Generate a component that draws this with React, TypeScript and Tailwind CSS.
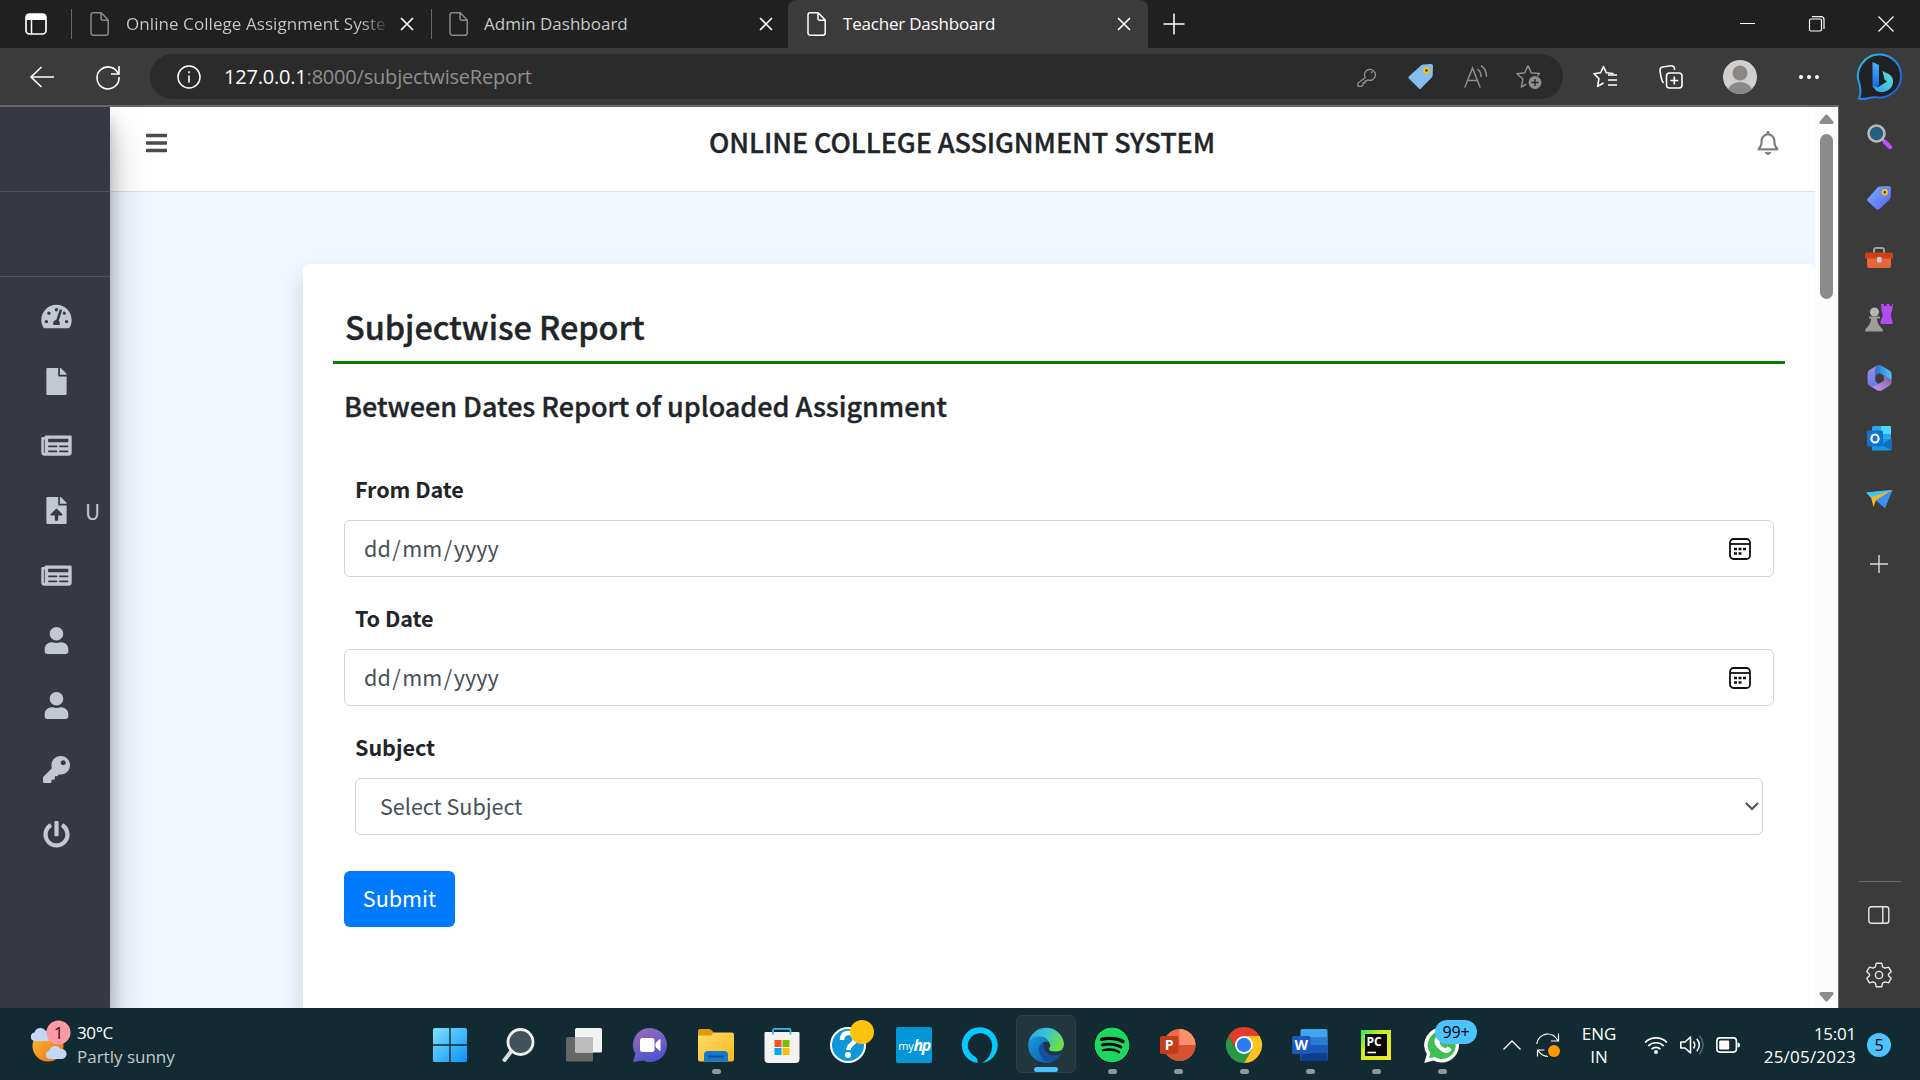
import type { ReactNode } from "react";
import {
  FaBars,
  FaFile,
  FaFileUpload,
  FaKey,
  FaNewspaper,
  FaPowerOff,
  FaRegBell,
  FaSpotify,
  FaTachometerAlt,
  FaUser,
} from "react-icons/fa";

const pageFont = "font-['Noto_Sans_CJK_SC',sans-serif]";
const uiFont = "font-['Open_Sans',sans-serif]";

function Svg({ box, className, children }: { box: string; className: string; children: ReactNode }) {
  return (
    <svg viewBox={box} className={"shrink-0 overflow-visible " + className} fill="none" stroke="none">
      {children}
    </svg>
  );
}

/* ---------- Tab strip ---------- */

function PageGlyph({ className }: { className: string }) {
  return (
    <Svg box="0 0 19 24" className={"h-6 w-[19px] " + className}>
      <path d="M3.2.8h8L18.2 8v13a2.2 2.2 0 0 1-2.2 2.2H3.2A2.2 2.2 0 0 1 1 21V3A2.2 2.2 0 0 1 3.2.8ZM11 1v5.5A1.8 1.8 0 0 0 12.800 8.300H18" stroke="currentColor" strokeWidth="1.5" strokeLinejoin="round" />
    </Svg>
  );
}

function CloseGlyph() {
  return (
    <Svg box="0 0 14 14" className="size-[14px] text-white">
      <path d="M1 1l12 12M13 1L1 13" stroke="currentColor" strokeWidth="1.6" />
    </Svg>
  );
}

function Divider() {
  return <div className="h-[30px] w-px shrink-0 bg-[#666]" />;
}

function TabStrip() {
  return (
    <div className="flex h-12 shrink-0 items-center bg-[#202020] text-[17px] text-[#c9c9c9]">
      <Svg box="0 0 22 22" className="ml-[25px] size-[22px]">
        <rect x="1" y="1" width="20" height="20" rx="3.5" stroke="#fff" strokeWidth="1.7" />
        <path d="M1 3.500A2.500 2.500 0 0 1 3.500 1h15A2.500 2.500 0 0 1 21 3.500V7H1Z" fill="#fff" />
        <path d="M6.500 7v14" stroke="#fff" strokeWidth="1.5" />
      </Svg>
      <div className="ml-6 flex h-full w-[360px] items-center">
        <Divider />
        <PageGlyph className="ml-[18px] text-[#8a8a8a]" />
        <div className="ml-[17px] w-[262px] overflow-hidden whitespace-nowrap bg-gradient-to-r from-[#c9c9c9] from-90% to-[#303030] bg-clip-text tracking-[0.07px] text-transparent">
          Online College Assignment Syste
        </div>
        <div className="ml-[12px]">
          <CloseGlyph />
        </div>
      </div>
      <div className="flex h-full w-[357px] items-center">
        <Divider />
        <PageGlyph className="ml-[17px] text-[#8a8a8a]" />
        <div className="ml-[16px] w-[262px] whitespace-nowrap">Admin Dashboard</div>
        <div className="ml-[13px]">
          <CloseGlyph />
        </div>
      </div>
      <div className="flex h-full w-[360px] items-center rounded-t-lg bg-[#3b3b3b] text-white">
        <PageGlyph className="ml-[19px] text-white" />
        <div className="ml-[17px] w-[262px] whitespace-nowrap tracking-[-0.2px]">Teacher Dashboard</div>
        <div className="ml-[12px]">
          <CloseGlyph />
        </div>
      </div>
      <Svg box="0 0 22 22" className="ml-[15px] size-[22px]">
        <path d="M11 .5v21M.5 11h21" stroke="#fff" strokeWidth="1.500" />
      </Svg>
      <Svg box="0 0 16 16" className="ml-auto size-4">
        <path d="M0 7.500h15" stroke="#fff" />
      </Svg>
      <Svg box="0 0 16 16" className="ml-[53px] size-4">
        <rect x=".5" y="3" width="12" height="12" rx="1.500" stroke="#fff" strokeWidth="1.200" />
        <path d="M3 .7h9a3 3 0 0 1 3 3V13" stroke="#fff" strokeWidth="1.200" />
      </Svg>
      <Svg box="0 0 16 16" className="ml-[53px] mr-[26px] size-4">
        <path d="M.5.5l15 15M15.500.5l-15 15" stroke="#fff" strokeWidth="1.200" />
      </Svg>
    </div>
  );
}

/* ---------- Address bar ---------- */

function BingLogo() {
  return (
    <Svg box="0 0 46 48" className="-mt-px ml-px h-12 w-[46px]">
      <defs>
        <linearGradient id="bingRing" x1="0" y1="0" x2="1" y2="1">
          <stop offset="0" stopColor="#22c8f0" />
          <stop offset="1" stopColor="#1f4fe0" />
        </linearGradient>
        <linearGradient id="bingStem" x1="0" y1="0" x2="0" y2="1">
          <stop offset="0" stopColor="#46b8f8" />
          <stop offset="1" stopColor="#1560e8" />
        </linearGradient>
        <linearGradient id="bingBowl" x1="0" y1="1" x2="1" y2="0">
          <stop offset="0" stopColor="#2aa4f4" />
          <stop offset="1" stopColor="#5ee6d0" />
        </linearGradient>
      </defs>
      <path d="M23 1.500a21.500 21.500 0 1 1-4 42.700C12 43.500 8 47.500 2 45.500 4.500 41 3.500 36 2.500 31A21.500 21.500 0 0 1 23 1.500Z" fill="#1f2124" stroke="url(#bingRing)" strokeWidth="2" />
      <path d="M15.500 9l6.500 3v20l-3 4-3.500-2.500Z" fill="url(#bingStem)" />
      <path d="M25.500 18l7 3.500q4 3 3.500 8-1 7-8 9-5 1.500-9-1l-3.500-4.500 5 1.500 9.500-6-2.500-2Z" fill="url(#bingBowl)" />
    </Svg>
  );
}

function StarPath() {
  return <path d="M10.500 1.500l2.800 6.300 6.700.7M10.500 1.500L7.700 7.800l-6.700.9 4.900 4.900-1.200 7.800 5.300-3.200" stroke="currentColor" strokeWidth="1.600" strokeLinejoin="round" strokeLinecap="round" />;
}

function Toolbar() {
  return (
    <div className="flex h-[57px] shrink-0 items-start bg-[#3b3b3b] pt-1.5">
      <div className="flex h-[45px] flex-1 items-center text-white">
        <Svg box="0 0 24 22" className="ml-[30px] h-[22px] w-6">
          <path d="M11.500 1L1 11l10.500 10M1 11h23" stroke="currentColor" strokeWidth="1.600" />
        </Svg>
        <Svg box="0 0 24 24" className="ml-[42px] size-6">
          <path d="M22.500 9.500A11 11 0 1 0 23 12M23 1v8h-8" stroke="currentColor" strokeWidth="1.600" />
        </Svg>
        <div className="ml-[30px] flex h-[45px] w-[1413px] items-center rounded-full bg-[#2b2b2b] text-[#8f8f8f]">
          <Svg box="0 0 24 24" className="ml-[27px] size-6 text-white">
            <circle cx="12" cy="12" r="11" stroke="currentColor" strokeWidth="1.500" />
            <path d="M12 10.500v7M12 6.200v2" stroke="currentColor" strokeWidth="1.600" />
          </Svg>
          <div className="ml-[23px] whitespace-nowrap pt-px text-[20px] tracking-[-0.2px]">
            <span className="text-white">127.0.0.1</span>:8000/subjectwiseReport
          </div>
          <Svg box="0 0 20 20" className="ml-auto size-5">
            <path d="M8.200 10.700a5.500 5.500 0 1 1 2.500 2.200L9.500 14H8v2H6v2l-1.300 1.300H1v-3.300Z" stroke="currentColor" strokeWidth="1.300" strokeLinejoin="round" />
            <circle cx="14.700" cy="5.200" r="1" fill="currentColor" />
          </Svg>
          <Svg box="0 0 25 25" className="ml-[31px] size-[25px]">
            <path d="M13 1.500Q14 .5 15.500.4L23 0q2 0 2 2l-.3 9q0 1.500-1 2.500L13 24.500q-1 1-2 0L.8 14.500q-1-1 0-2Z" fill="#83beec" />
            <circle cx="18.500" cy="6.500" r="2.300" stroke="#fdc400" strokeWidth="2" fill="#2b2b2b" />
          </Svg>
          <Svg box="0 0 24 24" className="ml-[31px] size-6">
            <path d="M1 22L8.500 3 16 22M3.500 15.500h10M14 4.500q3 2.500 3 7M17.500.8q5 4 5 10.500" stroke="currentColor" strokeWidth="1.500" strokeLinecap="round" />
          </Svg>
          <Svg box="0 0 26 26" className="ml-[28px] mr-[21px] size-[26px]">
            <path d="M12 1.500l3.200 7.200 8.300.8-2 2.300M12 1.500L8.800 8.700l-7.900 1 6 5.300-1.500 8 5-2.800" stroke="currentColor" strokeWidth="1.500" strokeLinejoin="round" />
            <circle cx="19" cy="18.500" r="6.500" fill="currentColor" />
            <path d="M19 15v7M15.500 18.500h7" stroke="#2b2b2b" strokeWidth="1.500" />
          </Svg>
        </div>
        <Svg box="0 0 24 24" className="ml-[30px] size-6">
          <StarPath />
          <path d="M15 10h9M15 15h9M15 20h9" stroke="currentColor" strokeWidth="1.600" />
        </Svg>
        <Svg box="0 0 24 24" className="ml-[42px] size-6">
          <rect x="7.500" y="8" width="15.500" height="15" rx="3" stroke="currentColor" strokeWidth="1.600" />
          <path d="M15.300 11.500v8M11.300 15.500h8M4.500 18C2 15 1.500 9 1 5.500A3 3 0 0 1 3.500 2L12 .8a3 3 0 0 1 3.500 2.500V5" stroke="currentColor" strokeWidth="1.600" />
        </Svg>
        <Svg box="0 0 34 34" className="ml-[40px] size-[34px]">
          <clipPath id="avatarClip">
            <circle cx="17" cy="17" r="17" />
          </clipPath>
          <circle cx="17" cy="17" r="17" fill="#d2d0ce" />
          <circle cx="17" cy="13" r="7.500" fill="#8a8886" />
          <ellipse cx="17" cy="31" rx="12" ry="9" fill="#8a8886" clipPath="url(#avatarClip)" />
        </Svg>
        <Svg box="0 0 20 4" className="ml-[42px] h-1 w-5">
          <circle cx="2" cy="2" r="2" fill="#fff" />
          <circle cx="10" cy="2" r="2" fill="#fff" />
          <circle cx="18" cy="2" r="2" fill="#fff" />
        </Svg>
      </div>
      <div className="flex w-[82px] shrink-0 justify-center">
        <BingLogo />
      </div>
    </div>
  );
}

/* ---------- Edge side bar ---------- */

function SideSlot({ className, children }: { className: string; children: ReactNode }) {
  return <div className={"flex w-full items-center justify-center pr-px " + className}>{children}</div>;
}

function EdgeSidebar() {
  return (
    <div className="flex w-[82px] shrink-0 flex-col border-l border-[#6a6a6a] bg-[#3b3b3b] pt-[2px]">
      <SideSlot className="h-[60px]">
        <Svg box="0 0 25 26" className="h-[26px] w-[25px]">
          <path d="M15 15l4 4" stroke="#9a9a9a" strokeWidth="3" />
          <circle cx="9.500" cy="9.500" r="8" fill="#235f80" stroke="#b8b8b8" strokeWidth="2.600" />
          <path d="M18 18l5 5" stroke="#c64bf5" strokeWidth="4.500" strokeLinecap="round" />
        </Svg>
      </SideSlot>
      <SideSlot className="h-[61px]">
        <Svg box="0 0 25 25" className="size-6">
          <defs>
            <linearGradient id="sideTag" x1="0" y1="0" x2="1" y2="1">
              <stop offset="0" stopColor="#73b4fb" />
              <stop offset="1" stopColor="#5b5ff5" />
            </linearGradient>
          </defs>
          <path d="M11 1.500Q12 .5 14 .4L22 0q3 0 3 3l-.3 8q0 2-1.300 3.200L13 24q-1.800 1.600-3.500 0L.8 16q-1.500-1.500 0-3Z" fill="url(#sideTag)" />
          <circle cx="18.500" cy="6.500" r="2.300" stroke="#fdc400" strokeWidth="2" fill="#333a70" />
        </Svg>
      </SideSlot>
      <SideSlot className="h-[60px]">
        <Svg box="0 0 28 22" className="h-[22px] w-7">
          <path d="M9 6V3q0-2 2-2h6q2 0 2 2v3" stroke="#a0a0a0" strokeWidth="2" />
          <path d="M2 10h24v9q0 2-2 2H4q-2 0-2-2Z" fill="#e8663c" />
          <path d="M0 7q0-1.500 1.500-1.500h25Q28 5.500 28 7v4.500H0Z" fill="#cf4112" />
          <rect x="12" y="10" width="4.500" height="5.500" rx="1" fill="#c8ccd0" />
        </Svg>
      </SideSlot>
      <SideSlot className="h-[59px]">
        <Svg box="0 0 28 28" className="size-7">
          <path d="M16 0h3v2h2.500V0h3v2H27V0h1l-1 7q-1.500 2-1 5.500l1.500 5V20H15.500v-2.500l2-5q.5-3.500-1-5.500Z" fill="#b44af2" />
          <circle cx="9.500" cy="8" r="4.500" fill="#b5b5b5" />
          <path d="M4 12.500h11v2h-3q0 5 4 9 2 1 2 4H0q0-3 2-4 4-4 4-9H4Z" fill="#9d9d9d" />
        </Svg>
      </SideSlot>
      <SideSlot className="h-[61px]">
        <Svg box="0 0 25 26" className="h-[26px] w-[25px]">
          <defs>
            <linearGradient id="officeLeft" x1="0" y1="0" x2="0" y2="1">
              <stop offset="0" stopColor="#a58be0" />
              <stop offset="1" stopColor="#5f7fe8" />
            </linearGradient>
            <linearGradient id="officeTop" x1="0" y1="0" x2="1" y2="0">
              <stop offset="0" stopColor="#2b6fd0" />
              <stop offset="1" stopColor="#4cc8f2" />
            </linearGradient>
            <linearGradient id="officeBase" x1="0" y1="1" x2="1" y2="0">
              <stop offset="0" stopColor="#c79ae8" />
              <stop offset="1" stopColor="#8458b0" />
            </linearGradient>
          </defs>
          <path d="M10.500.3L3 4.500Q.5 6 .5 8.500v9q0 2 2 3.200L4 21.500q2 .8 4-.8l3-2L8.500 16V5q0-3 2-4.700Z" fill="url(#officeLeft)" />
          <path d="M10.500.3q2-.8 4 .4l8 4.800q2 1.200 2 3.500V15l-7-4-5-3-4 2.500V5q0-3 2-4.700Z" fill="url(#officeTop)" />
          <path d="M24.500 14.500v2.700q0 2.300-2 3.500l-7.500 4.500q-2.500 1.300-5 0L3.500 21.300q2.500.6 4.500-.8l8.500-5v-5Z" fill="url(#officeBase)" />
          <path d="M12.300 8.700l4.400 2.500v4.600l-4.400 2.600L8.500 16v-5Z" fill="#3b3b3b" />
        </Svg>
      </SideSlot>
      <SideSlot className="h-[61px]">
        <Svg box="0 0 25 25" className="size-[25px]">
          <rect x="5" y="0" width="19" height="22" rx="1.500" fill="#28a8ea" />
          <path d="M14 0h8.500Q24 0 24 1.500V8H14Z" fill="#50d9ff" />
          <path d="M4 13l20.500 0V23q0 1.500-1.500 1.500H5Z" fill="#159bdf" />
          <path d="M24.500 12L14 19l10.500 5Z" fill="#126fc0" />
          <rect x="0" y="4.500" width="16" height="16" rx="1.500" fill="#0f72cf" />
          <ellipse cx="8" cy="12.500" rx="3.600" ry="4" stroke="#fff" strokeWidth="2.200" />
        </Svg>
      </SideSlot>
      <SideSlot className="h-[60px]">
        <Svg box="0 0 27 19" className="h-[19px] w-[27px]">
          <path d="M0 2.500L26.500 0 19 18 10 10Z" fill="#3b9af2" />
          <path d="M0 2.500L26.500 0 5 8Z" fill="#3fc6f3" />
          <path d="M26.500 0L5 7.500l2.500 9.500L10 10Z" fill="#f5b81c" />
          <path d="M26 .5L10 10.500 19 18Z" fill="#3f8df0" />
        </Svg>
      </SideSlot>
      <SideSlot className="h-[70px] pr-[3px]">
        <Svg box="0 0 18 18" className="size-[18px]">
          <path d="M9 0v18M0 9h18" stroke="#ddd" strokeWidth="1.400" />
        </Svg>
      </SideSlot>
      <div className="mx-auto mt-auto h-px w-[42px] shrink-0 bg-[#6a6a6a]" />
      <SideSlot className="h-[66px] pr-[2px]">
        <Svg box="0 0 22 18" className="h-[18px] w-[22px]">
          <rect x=".8" y=".8" width="20" height="16.500" rx="2.500" stroke="#e8e8e8" strokeWidth="1.400" />
          <path d="M14.800 1v16" stroke="#e8e8e8" strokeWidth="1.400" />
        </Svg>
      </SideSlot>
      <SideSlot className="mb-[6px] h-[54px] pr-[2px]">
        <Svg box="0 0 26 26" className="size-[26px]">
          <path d="M10.300 1.200h5.400l.9 3.700 2.300 1.300 3.700-1.100 2.600 4.600-2.700 2.600v1.400l2.700 2.600-2.600 4.600-3.700-1.100-2.300 1.300-.9 3.700h-5.400l-.9-3.700-2.300-1.300-3.700 1.100L.8 16.300l2.700-2.600v-1.400L.8 9.700l2.600-4.600 3.700 1.100 2.300-1.300Z" stroke="#e8e8e8" strokeWidth="1.400" strokeLinejoin="round" />
          <circle cx="13" cy="13" r="3.600" stroke="#e8e8e8" strokeWidth="1.400" />
        </Svg>
      </SideSlot>
    </div>
  );
}

/* ---------- Web page ---------- */

function NavRow({ children, label }: { children: ReactNode; label?: string }) {
  return (
    <div className="flex h-[64.800px] w-full items-center">
      <div className="ml-10 flex w-8 shrink-0 justify-center text-[#c2c7d0]">{children}</div>
      {label ? <div className="ml-[13px] text-[21px] leading-8 text-[#c2c7d0]">{label}</div> : null}
    </div>
  );
}

function NavSidebar() {
  return (
    <div className="relative z-10 flex w-[110px] shrink-0 flex-col bg-[#363942] shadow-[0_21px_42px_rgba(0,0,0,0.25),0_15px_15px_rgba(0,0,0,0.22)]">
      <div className="h-[85px] shrink-0 border-b border-[#4b545c]" />
      <div className="h-[85px] shrink-0 border-b border-[#4b545c]" />
      <div className="flex flex-col pt-[7px]">
        <NavRow><FaTachometerAlt className="h-[27px] w-[31px]" /></NavRow>
        <NavRow><FaFile className="size-[27px]" /></NavRow>
        <NavRow><FaNewspaper className="h-[27px] w-[31px]" /></NavRow>
        <NavRow label="U"><FaFileUpload className="size-[27px]" /></NavRow>
        <NavRow><FaNewspaper className="h-[27px] w-[31px]" /></NavRow>
        <NavRow><FaUser className="size-[27px]" /></NavRow>
        <NavRow><FaUser className="size-[27px]" /></NavRow>
        <NavRow><FaKey className="size-[27px]" /></NavRow>
        <NavRow><FaPowerOff className="size-[27px]" /></NavRow>
      </div>
    </div>
  );
}

function DateField({ label }: { label: string }) {
  return (
    <div className="mb-[23px]">
      <div className="mb-[13px] ml-[11px] text-[21.600px] font-bold leading-9 tracking-[-0.08px] text-[#212529]">{label}</div>
      <div className="flex h-[57px] items-center justify-between rounded-[6px] border border-[#ced4da] bg-white pl-[19px] pr-[22px] text-[21.600px] text-[#495057]">
        <div className="pb-0.5 leading-8">
          dd<span className="px-[1.500px]">/</span>mm<span className="px-[1.500px]">/</span>yyyy
        </div>
        <Svg box="0 0 22 22" className="size-[22px]">
          <rect x="1" y="1" width="20" height="20" rx="3.500" stroke="#111" strokeWidth="1.800" />
          <path d="M1 6h20" stroke="#111" strokeWidth="1.800" />
          <path d="M5 11h3M9.500 11h3M14 11h3M5 15.500h3M9.500 15.500h3" stroke="#111" strokeWidth="2.600" />
        </Svg>
      </div>
    </div>
  );
}

function Report() {
  return (
    <div className="ml-[193px] mt-[72px] flex-1 rounded-t-[6px] bg-white pl-[30px] pr-[30px] pt-9 text-[#212529] shadow-[0_12px_24px_rgba(0,0,0,0.15)]">
      <div className="border-b-[3px] border-[#008000] pb-[9px] pl-3 text-[32.400px] font-medium leading-[52px] tracking-[-0.03px] [-webkit-text-stroke:0.4px]">Subjectwise Report</div>
      <div className="px-[11px]">
        <div className="mt-[22px] text-[27px] font-medium leading-10 tracking-[-0.040px] [-webkit-text-stroke:0.35px]">Between Dates Report of uploaded Assignment</div>
        <div className="pt-[45px]">
          <DateField label="From Date" />
          <DateField label="To Date" />
          <div className="mx-[11px]">
            <div className="mb-[13px] text-[21.600px] font-bold leading-9 tracking-[-0.08px]">Subject</div>
            <div className="flex h-[57px] items-center justify-between rounded-[6px] border border-[#ced4da] bg-white pl-6 pr-[3px] text-[21.600px] tracking-[-0.03px] text-[#495057]">
              <div className="pb-px leading-8">Select Subject</div>
              <Svg box="0 0 14 9" className="h-[9px] w-[14px]">
                <path d="M1 1l6 6 6-6" stroke="#495057" strokeWidth="2" />
              </Svg>
            </div>
          </div>
          <div className="mt-9 flex h-14 w-[111px] items-center justify-center rounded-[6px] bg-[#007bff] pb-px text-[21.600px] text-white">Submit</div>
        </div>
      </div>
    </div>
  );
}

function WebPage() {
  return (
    <div className={"flex min-w-0 flex-1 overflow-hidden bg-[#f0f7ff] " + pageFont}>
      <NavSidebar />
      <div className="flex min-w-0 flex-1 flex-col">
        <div className="h-[85px] shrink-0 border-b border-[#dee2e6] bg-white">
          <div className="flex h-[72px] items-center justify-between pl-9 pr-9">
            <FaBars className="h-6 w-[21px] text-[#4b4b4b]" />
            <div className="pb-0.5 text-[27px] font-medium leading-8 tracking-[-0.080px] text-[#212529] [-webkit-text-stroke:0.35px]">ONLINE COLLEGE ASSIGNMENT SYSTEM</div>
            <FaRegBell className="h-6 w-[22px] text-[#7f7f7f]" />
          </div>
        </div>
        <Report />
      </div>
    </div>
  );
}

function ScrollBar() {
  return (
    <div className="flex w-[23px] shrink-0 flex-col items-center bg-[#fcfcfc] pt-[7px]">
      <Svg box="0 0 15 10" className="h-2.5 w-[15px]">
        <path d="M6.300 1q1.200-1.200 2.400 0l5.500 6.500q1 2-1 2.500H1.800q-2-.5-1-2.500Z" fill="#8b8b8b" />
      </Svg>
      <div className="mt-2.5 h-[165px] w-[13px] rounded-full bg-[#8b8b8b]" />
      <Svg box="0 0 15 10" className="mb-1.5 mt-auto h-2.5 w-[15px]">
        <path d="M6.300 9q1.200 1.200 2.400 0l5.500-6.500q1-2-1-2.500H1.800q-2 .5-1 2.500Z" fill="#8b8b8b" />
      </Svg>
    </div>
  );
}

/* ---------- Task bar ---------- */

function TaskSlot({ children, running }: { children: ReactNode; running?: boolean }) {
  return (
    <div className="relative flex h-full w-[66px] shrink-0 items-center justify-center pt-0.5">
      {children}
      {running ? <div className="absolute bottom-1.5 h-[5px] w-[9px] rounded-full bg-[#8f999c]" /> : null}
    </div>
  );
}

function Cloud({ x, y }: { x: number; y: number }) {
  return <path transform={`translate(${x} ${y})`} d="M4.500 15A4.300 4.300 0 0 1 4.500 6.500 6 6 0 0 1 15.500 5a5 5 0 0 1 2 10Z" fill="#c3d6f6" />;
}

function Weather() {
  return (
    <div className="flex w-[417px] shrink-0 items-center pl-[30px] pt-0.5">
      <Svg box="0 0 37 34" className="mb-px h-[34px] w-[37px]">
        <defs>
          <linearGradient id="sun" x1="0" y1="0" x2="1" y2="1">
            <stop offset="0" stopColor="#fbc13a" />
            <stop offset="1" stopColor="#ee6a12" />
          </linearGradient>
        </defs>
        <circle cx="18" cy="18" r="15.500" fill="url(#sun)" />
        <Cloud x={0} y={-2} />
        <Cloud x={15} y={16} />
        <circle cx="28.500" cy="4.500" r="12" fill="#ff9aa5" />
        <text x="28.500" y="10.500" fontSize="17" fill="#1a1a1a" textAnchor="middle" className={uiFont}>1</text>
      </Svg>
      <div className="ml-2.5 whitespace-nowrap text-[17px] leading-[24px]">
        <div className="tracking-[-0.4px] text-white">30°C</div>
        <div className="text-[#c3cacb]">Partly sunny</div>
      </div>
    </div>
  );
}

function OfficeIcon({ letter, word }: { letter: string; word?: boolean }) {
  return (
    <Svg box="0 0 36 34" className="h-[34px] w-9">
      {word ? (
        <>
          <rect x="8.500" y="1" width="27" height="32" rx="2" fill="#41a5ee" />
          <rect x="8.500" y="9" width="27" height="8" fill="#2b7cd3" />
          <rect x="8.500" y="17" width="27" height="8" fill="#185abd" />
          <path d="M8.500 25h27v6q0 2-2 2h-23q-2 0-2-2Z" fill="#103f91" />
        </>
      ) : (
        <>
          <circle cx="19.500" cy="17" r="16" fill="#ed6c47" />
          <path d="M19.500 1a16 16 0 0 1 16 16h-16Z" fill="#ff8f6b" />
          <path d="M3.500 17h32a16 16 0 0 1-32 0Z" fill="#d35230" />
        </>
      )}
      <rect x="0" y="8" width="18.500" height="18" rx="1.800" fill={word ? "#185abd" : "#c43e1c"} />
      <text x="9.200" y="22" fontSize="14" fontWeight="700" fill="#fff" textAnchor="middle" className={uiFont}>{letter}</text>
    </Svg>
  );
}

function TaskIcons() {
  return (
    <div className="flex h-full shrink-0">
      <TaskSlot>
        <Svg box="0 0 36 36" className="size-9">
          <defs>
            <linearGradient id="win" x1="0" y1="0" x2="1" y2="1">
              <stop offset="0" stopColor="#7fe0ff" />
              <stop offset="1" stopColor="#0a93f5" />
            </linearGradient>
          </defs>
          <path d="M2.500 1H17.300V17.300H1V2.500Q1 1 2.500 1ZM18.700 1H33.500Q35 1 35 2.500V17.300H18.700ZM1 18.700H17.300V35H2.500Q1 35 1 33.500ZM18.700 18.700H35V33.500Q35 35 33.500 35H18.700Z" fill="url(#win)" />
        </Svg>
      </TaskSlot>
      <div className="ml-0.5 flex h-full">
        <TaskSlot>
          <Svg box="0 0 36 36" className="size-9">
            <path d="M11.500 24L4.500 33" stroke="#dcdcdc" strokeWidth="4" strokeLinecap="round" />
            <circle cx="20.500" cy="15" r="12.500" fill="#3f5359" stroke="#f0f0f0" strokeWidth="2.800" />
          </Svg>
        </TaskSlot>
      </div>
      <TaskSlot>
        <Svg box="0 0 36 36" className="size-9">
          <rect x="0" y="10" width="27" height="24.500" rx="1.500" fill="#666" />
          <rect x="9" y="1" width="27" height="24.500" rx="1.500" fill="#f2f2f2" />
          <path d="M9 10h18v15.500H10.500Q9 25.500 9 24Z" fill="#bdbdbd" />
        </Svg>
      </TaskSlot>
      <TaskSlot>
        <Svg box="0 0 36 36" className="size-9">
          <defs>
            <linearGradient id="chat" x1="0" y1="0" x2=".4" y2="1">
              <stop offset="0" stopColor="#9a6cb8" />
              <stop offset="1" stopColor="#5256cc" />
            </linearGradient>
          </defs>
          <path d="M18 1a17 17 0 1 1-7 32.500L2 35q-1.300-.2-.8-1.500L3.500 27A17 17 0 0 1 18 1Z" fill="url(#chat)" />
          <rect x="8" y="11" width="14.500" height="14" rx="2.500" fill="#fff" />
          <path d="M24 16l4-3.500v11L24 20Z" fill="#fff" stroke="#fff" strokeLinejoin="round" />
        </Svg>
      </TaskSlot>
      <TaskSlot running>
        <Svg box="0 0 36 36" className="size-9">
          <defs>
            <linearGradient id="folder" x1="0" y1="0" x2="1" y2="1">
              <stop offset="0" stopColor="#ffdc6a" />
              <stop offset="1" stopColor="#f8b91c" />
            </linearGradient>
          </defs>
          <path d="M0 4q0-2 2-2h9q1.500 0 2.500 1l2.500 3v8H0Z" fill="#e09a10" />
          <path d="M0 8.500h12Q13.500 8.500 14.500 7l1-1.500H34q2 0 2 2v24.500q0 2.500-2 2.500H2q-2 0-2-2Z" fill="url(#folder)" />
          <path d="M6 34.500V28q0-4 4-4h16q4 0 4 4v6.500Z" fill="#1478d0" />
          <path d="M11 29.500h14" stroke="#0a4d92" strokeWidth="2" strokeLinecap="round" />
        </Svg>
      </TaskSlot>
      <TaskSlot>
        <Svg box="0 0 36 36" className="size-9">
          <path d="M.5 6Q.5 5 1.500 5h33q1 0 1 1v26q0 4-4 4h-27q-4 0-4-4Z" fill="#f3f3f3" />
          <path d="M9 7.500V2.800q0-1 1-1h15.500q1 0 1 1v4.700" stroke="#35b4f2" strokeWidth="1.800" />
          <rect x="10.500" y="13" width="7" height="7" fill="#f35325" />
          <rect x="18.500" y="13" width="7" height="7" fill="#81bc06" />
          <rect x="10.500" y="21" width="7" height="7" fill="#05a6f0" />
          <rect x="18.500" y="21" width="7" height="7" fill="#ffba08" />
        </Svg>
      </TaskSlot>
      <TaskSlot>
        <Svg box="0 0 36 36" className="size-9">
          <circle cx="18" cy="18" r="17" fill="#0f97db" stroke="#fff" strokeWidth="2" />
          <path d="M12 13q0-7 6.500-7t6.500 5.500q0 3.500-3.500 6-3 2.200-3 5.500" stroke="#fff" strokeWidth="4.500" />
          <circle cx="18" cy="28" r="3" fill="#fff" />
          <circle cx="32" cy="5" r="12" fill="#ffc20e" />
        </Svg>
      </TaskSlot>
      <TaskSlot>
        <div className="flex size-9 items-center justify-center rounded-[2px] bg-[#0496d6] text-white">
          <span className="text-[11px] leading-none tracking-tight">my</span>
          <span className="text-[16px] font-bold italic leading-none tracking-[-1.500px]">hp</span>
        </div>
      </TaskSlot>
      <TaskSlot>
        <Svg box="0 0 36 36" className="size-9">
          <path d="M15.500 36A18 18 0 1 1 20 36Q30 30 30.200 18.500A12.200 12.200 0 1 0 12 29q3.500 2 3.500 4Z" fill="#05c8ff" />
        </Svg>
      </TaskSlot>
      <div className="relative mx-[3px] my-[7px] flex w-[60px] items-center justify-center rounded-md border border-[#2d4047] bg-[#22363d] pt-0.5">
        <Svg box="0 0 36 36" className="size-9">
          <defs>
            <linearGradient id="edgeTop" x1="0" y1="0" x2="1" y2=".4">
              <stop offset="0" stopColor="#2f9fe0" />
              <stop offset=".5" stopColor="#36c3d8" />
              <stop offset="1" stopColor="#6be04c" />
            </linearGradient>
            <linearGradient id="edgeLow" x1="0" y1="0" x2="1" y2="1">
              <stop offset="0" stopColor="#1b9de2" />
              <stop offset="1" stopColor="#0c59a4" />
            </linearGradient>
          </defs>
          <path d="M.3 16A18 18 0 0 1 36 17q0 7.500-8 7.500-7 0-7-2.500 0-1 1-2 .8-2.500-1-5Q17 9 9.500 10 3 11 .3 16Z" fill="url(#edgeTop)" />
          <path d="M.2 16.500Q3 9.500 10 9.500q8 0 11 5.500-8-1.500-8.500 5Q12.500 28 20 33l2.500 2.500A18 18 0 0 1 .2 16.500Z" fill="url(#edgeLow)" />
          <path d="M15.500 15.500Q10 18 11 24.500 13 33 22 35.500q7.500-2 11.700-9-7 3.500-13 .5-6-3.500-5.200-11.500Z" fill="#1250a0" />
        </Svg>
        <div className="absolute bottom-0 h-[5px] w-6 rounded-full bg-[#4cc2ff]" />
      </div>
      <TaskSlot running>
        <div className="flex size-9 items-center justify-center rounded-full bg-black">
          <FaSpotify className="size-9 text-[#1ed760]" />
        </div>
      </TaskSlot>
      <TaskSlot running>
        <OfficeIcon letter="P" />
      </TaskSlot>
      <TaskSlot running>
        <Svg box="0 0 36 36" className="size-9">
          <path d="M2.400 9A18 18 0 0 1 33.600 9H18L10.200 22.500Z" fill="#e33b2e" />
          <path d="M2.400 9A18 18 0 0 0 18 36L25.800 22.500H10.200Z" fill="#269a44" />
          <path d="M33.600 9A18 18 0 0 1 18 36L25.800 22.500 18 9Z" fill="#fcc31e" />
          <circle cx="18" cy="18" r="9" fill="#fff" />
          <circle cx="18" cy="18" r="7.200" fill="#2e7df0" />
        </Svg>
      </TaskSlot>
      <TaskSlot running>
        <OfficeIcon letter="W" word />
      </TaskSlot>
      <TaskSlot running>
        <Svg box="0 0 30 30" className="size-[30px]">
          <defs>
            <linearGradient id="pc" x1="0" y1="0" x2="1" y2="1">
              <stop offset="0" stopColor="#21e66a" />
              <stop offset=".35" stopColor="#c8ee20" />
              <stop offset="1" stopColor="#f4ea2a" />
            </linearGradient>
          </defs>
          <rect width="30" height="30" fill="url(#pc)" />
          <rect x="4" y="4" width="22" height="22" fill="#0a0a0a" />
          <text x="5.500" y="15.500" fontSize="12" fontWeight="700" fill="#fff" className={uiFont}>PC</text>
          <path d="M6.500 22.500h8.500" stroke="#fff" strokeWidth="1.600" />
        </Svg>
      </TaskSlot>
      <TaskSlot running>
        <Svg box="0 0 36 36" className="size-9">
          <path d="M18 .5a17.500 17.500 0 1 1-8.500 33L.3 36l2.500-9A17.500 17.500 0 0 1 18 .5Z" fill="#fff" />
          <path d="M18 4a14 14 0 1 1-7.500 26L5 31.300 6.300 26A14 14 0 0 1 18 4Z" fill="#3fbf50" />
          <path d="M12.500 10q2-1 3 1l1 2.500q.3 1-1.200 2.500 2 4 6 5.500l2-2q3.500 1 4 2.500 0 3.500-4.500 4-4 0-8.500-4.500-4-4-4-7.500 0-2.500 2.200-4Z" fill="#fff" />
        </Svg>
        <div className="absolute left-[26px] top-3 flex h-6 w-[42px] items-center justify-center rounded-full bg-[#4cc2ff] text-[16px] leading-none tracking-[-0.1px] text-black">99+</div>
      </TaskSlot>
    </div>
  );
}

function Tray() {
  return (
    <div className="flex h-full flex-1 items-center pt-px text-[17px] leading-[23px] text-white">
      <Svg box="0 0 18 10" className="ml-[28px] h-2.5 w-[18px]">
        <path d="M.5 9.500L9 1l8.500 8.500" stroke="#fff" strokeWidth="1.400" />
      </Svg>
      <Svg box="0 0 24 24" className="ml-[15px] size-6">
        <path d="M.8 11A11 11 0 0 1 22 8M22.500.5V8H15M1.500 23.500V17H8.500M2 17q3 6 10 6.500" stroke="#fff" strokeWidth="1.200" />
        <circle cx="18" cy="18" r="6" fill="#ff9a00" />
      </Svg>
      <div className="ml-[21px] w-[36px] whitespace-nowrap text-center">
        <div>ENG</div>
        <div>IN</div>
      </div>
      <Svg box="0 0 24 18" className="ml-[27px] h-[18px] w-6">
        <path d="M1 6.500a15.500 15.500 0 0 1 22 0M4.200 10a11 11 0 0 1 15.600 0M7.500 13.200a6.500 6.500 0 0 1 9 0" stroke="#fff" strokeWidth="1.700" />
        <circle cx="12" cy="16" r="2" fill="#fff" />
      </Svg>
      <Svg box="0 0 24 20" className="ml-3 h-5 w-6">
        <path d="M.8 7v6H5l5.500 5V2L5 7Z" stroke="#fff" strokeWidth="1.600" strokeLinejoin="round" />
        <path d="M13.500 6.500q2.500 3.500 0 7M16.800 3.800q5 6.200 0 12.400" stroke="#fff" strokeWidth="1.500" />
        <path d="M19.500.8q7 9.200 0 18.400" stroke="#52666b" strokeWidth="1.500" />
      </Svg>
      <Svg box="0 0 24 16" className="ml-3 h-4 w-6">
        <rect x=".9" y=".9" width="19.500" height="14.200" rx="3" stroke="#fff" strokeWidth="1.600" />
        <rect x="3.200" y="3.500" width="10" height="9" rx="1" fill="#fff" />
        <path d="M21.500 5.500q2.500 0 2.500 2.500t-2.500 2.500Z" fill="#fff" />
      </Svg>
      <div className="ml-auto whitespace-nowrap text-right">
        <div className="tracking-[-0.250px]">15:01</div>
        <div className="tracking-[0.200px]">25/05/2023</div>
      </div>
      <div className="ml-[11px] mr-[29px] flex size-6 items-center justify-center rounded-full bg-[#4cc2ff] text-[16px] leading-none text-black">5</div>
    </div>
  );
}

export default function App() {
  return (
    <div className={"flex h-[1080px] w-[1920px] flex-col overflow-hidden " + uiFont}>
      <TabStrip />
      <Toolbar />
      <div className="flex h-[903px] shrink-0">
        <div className="flex min-w-0 flex-1 border-t-2 border-[#666]">
          <WebPage />
          <ScrollBar />
        </div>
        <EdgeSidebar />
      </div>
      <div className="flex h-[72px] shrink-0 items-center bg-[#122a31]">
        <Weather />
        <TaskIcons />
        <Tray />
      </div>
    </div>
  );
}
